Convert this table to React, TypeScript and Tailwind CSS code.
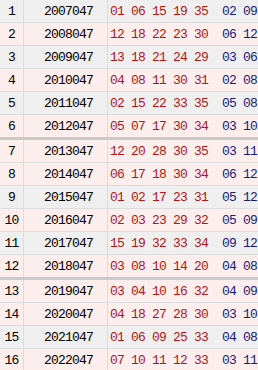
import React from 'react';

type Row = { idx: number; year: string; red: string[]; blue: string[] };

const rows: Row[] = [
  { idx: 1, year: '2007047', red: ['01', '06', '15', '19', '35'], blue: ['02', '09'] },
  { idx: 2, year: '2008047', red: ['12', '18', '22', '23', '30'], blue: ['06', '12'] },
  { idx: 3, year: '2009047', red: ['13', '18', '21', '24', '29'], blue: ['03', '06'] },
  { idx: 4, year: '2010047', red: ['04', '08', '11', '30', '31'], blue: ['02', '08'] },
  { idx: 5, year: '2011047', red: ['02', '15', '22', '33', '35'], blue: ['05', '08'] },
  { idx: 6, year: '2012047', red: ['05', '07', '17', '30', '34'], blue: ['03', '10'] },
  { idx: 7, year: '2013047', red: ['12', '20', '28', '30', '35'], blue: ['03', '11'] },
  { idx: 8, year: '2014047', red: ['06', '17', '18', '30', '34'], blue: ['06', '12'] },
  { idx: 9, year: '2015047', red: ['01', '02', '17', '23', '31'], blue: ['05', '12'] },
  { idx: 10, year: '2016047', red: ['02', '03', '23', '29', '32'], blue: ['05', '09'] },
  { idx: 11, year: '2017047', red: ['15', '19', '32', '33', '34'], blue: ['09', '12'] },
  { idx: 12, year: '2018047', red: ['03', '08', '10', '14', '20'], blue: ['04', '08'] },
  { idx: 13, year: '2019047', red: ['03', '04', '10', '16', '32'], blue: ['04', '09'] },
  { idx: 14, year: '2020047', red: ['04', '18', '27', '28', '30'], blue: ['03', '10'] },
  { idx: 15, year: '2021047', red: ['01', '06', '09', '25', '33'], blue: ['04', '08'] },
  { idx: 16, year: '2022047', red: ['07', '10', '11', '12', '33'], blue: ['03', '11'] },
];

const grayRows = [1, 3, 5, 9, 11, 15];

export default function App() {
  return (
    <div
      className="w-[258px] h-[370px] overflow-hidden bg-white text-[13px] leading-none"
      style={{ fontFamily: '"Liberation Mono", "DejaVu Sans Mono", monospace' }}
    >
      {rows.map((r) => {
        const gray = grayRows.includes(r.idx);
        const sep = r.idx === 6 || r.idx === 12;
        return (
          <div
            key={r.idx}
            className={`flex h-[23px] items-center ${gray ? 'bg-[#efefef]' : 'bg-[#fdeeee]'} ${
              sep ? 'border-b-[3px] border-[#c9c9c9] h-[25px]' : 'border-b border-[#dcdcdc]'
            }`}
          >
            <div className="w-6 h-full flex items-center justify-center text-black border-r border-[#dcdcdc] tracking-[-0.8px]">
              {r.idx}
            </div>
            <div className="w-[84px] h-full flex items-center justify-center pl-[6px] text-black border-r border-[#dcdcdc] tracking-[-0.8px]">
              {r.year}
            </div>
            <div className="flex items-center pl-[2px] text-[#b01818] tracking-[-0.8px] whitespace-pre">
              {r.red.join(' ')}
            </div>
            <div className="flex items-center pl-[14px] text-[#1a1a7a] tracking-[-0.8px] whitespace-pre">
              {r.blue.join(' ')}
            </div>
          </div>
        );
      })}
    </div>
  );
}
